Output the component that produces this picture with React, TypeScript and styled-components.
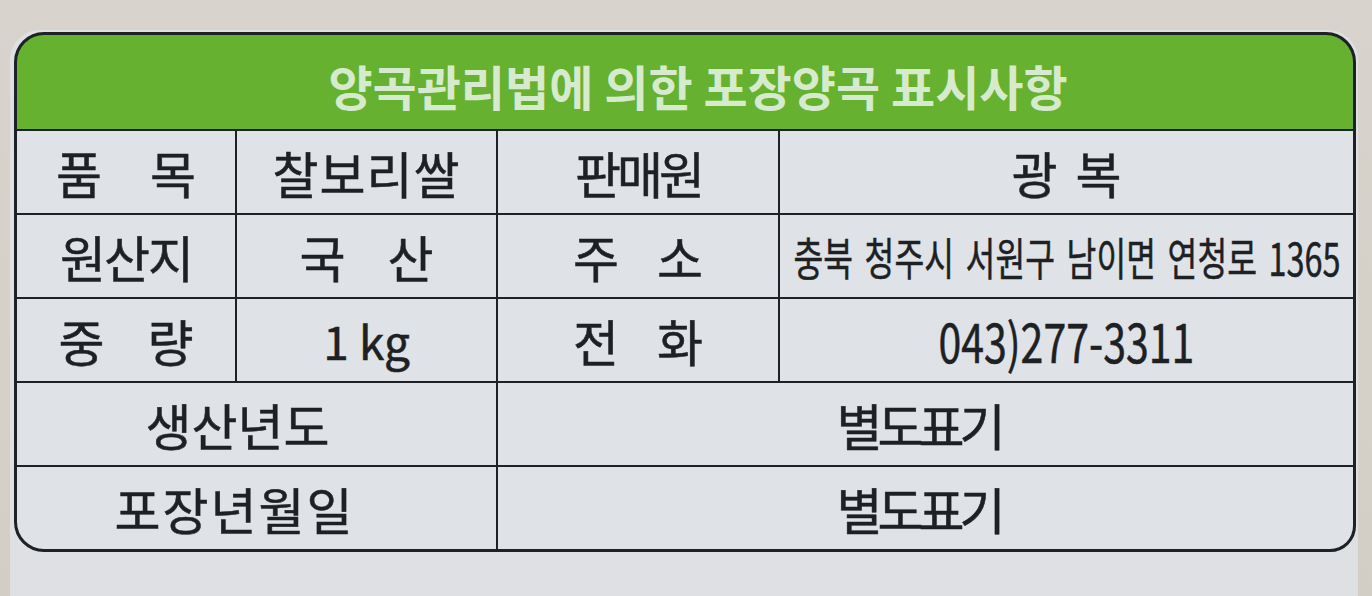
import React from "react";
import styled, { createGlobalStyle } from "styled-components";

const GlobalStyle = createGlobalStyle`
  html, body {
    margin: 0;
    padding: 0;
    background: #d6d1c8;
  }
  body {
    font-family: "Noto Sans CJK KR", "Noto Sans", sans-serif;
    color: #1d2124;
  }
`;

const Page = styled.div`
  width: 1372px;
  height: 596px;
  box-sizing: border-box;
  padding: 30px 0 0 10px;
  overflow: hidden;
  background: linear-gradient(180deg, #d8d4cd 0%, #d3cec5 100%);
`;

const Sticker = styled.div`
  width: 1348px;
  height: 566px;
  box-sizing: border-box;
  padding: 2px 2px 0 4px;
  background: #dee0e3;
  border-radius: 30px 30px 0 0;
`;

const Table = styled.div`
  width: 1342px;
  box-sizing: border-box;
  display: grid;
  grid-template-columns: 218px 259px 280px 573px;
  grid-template-rows: 94px repeat(5, 82px);
  gap: 2px;
  background: #1e2226;
  border: 3px solid #1e2226;
  border-radius: 30px 30px 26px 30px;
  overflow: hidden;
`;

const Header = styled.div`
  grid-column: 1 / -1;
  display: flex;
  align-items: center;
  justify-content: center;
  padding: 6px 0 0 26px;
  background: #67b130;
  color: #d6eacd;
  font-size: 48px;
  font-weight: 700;
  letter-spacing: 0;
  white-space: nowrap;
`;

const Cell = styled.div<{
  $span?: number;
  $track?: number;
  $shift?: number;
  $size?: number;
}>`
  grid-column: span ${(p) => p.$span ?? 1};
  display: flex;
  align-items: center;
  justify-content: center;
  box-sizing: border-box;
  padding-right: ${(p) => p.$shift ?? 0}px;
  background: #dfe2e6;
  font-size: ${(p) => p.$size ?? 50}px;
  font-weight: 400;
  line-height: 1;
  letter-spacing: ${(p) => p.$track ?? 0}px;
  white-space: nowrap;
  -webkit-text-stroke: 0.5px #1d2124;
`;

const Spaced = styled.span<{ $gap: number }>`
  display: flex;
  gap: ${(p) => p.$gap}px;
  letter-spacing: 0;
`;

const Condensed = styled.span<{ $sx: number; $size: number; $word?: number }>`
  display: inline-block;
  font-size: ${(p) => p.$size}px;
  transform: scaleX(${(p) => p.$sx});
  transform-origin: center;
  word-spacing: ${(p) => p.$word ?? 0}px;
  letter-spacing: 0;
`;

const Spread = ({ text, gap }: { text: string; gap: number }) => (
  <Spaced $gap={gap}>
    {text.split("").map((ch, i) => (
      <span key={i}>{ch}</span>
    ))}
  </Spaced>
);

export default function App() {
  return (
    <>
      <GlobalStyle />
      <Page>
        <Sticker>
          <Table>
            <Header>양곡관리법에 의한 포장양곡 표시사항</Header>

            <Cell>
              <Spread text="품목" gap={48} />
            </Cell>
            <Cell $track={1}>찰보리쌀</Cell>
            <Cell $track={-4}>판매원</Cell>
            <Cell>
              <Spread text="광복" gap={18} />
            </Cell>

            <Cell $track={-2}>원산지</Cell>
            <Cell>
              <Spread text="국산" gap={42} />
            </Cell>
            <Cell>
              <Spread text="주소" gap={38} />
            </Cell>
            <Cell>
              <Condensed $sx={0.72} $size={45} $word={6}>
                충북 청주시 서원구 남이면 연청로 1365
              </Condensed>
            </Cell>

            <Cell>
              <Spread text="중량" gap={43} />
            </Cell>
            <Cell $size={46}>1 kg</Cell>
            <Cell>
              <Spread text="전화" gap={38} />
            </Cell>
            <Cell>
              <Condensed $sx={0.76} $size={54}>
                043)277-3311
              </Condensed>
            </Cell>

            <Cell $span={2} $track={0} $shift={38}>
              생산년도
            </Cell>
            <Cell $span={2} $track={-5} $shift={14}>
              별도표기
            </Cell>

            <Cell $span={2} $track={2} $shift={44}>
              포장년월일
            </Cell>
            <Cell $span={2} $track={-5} $shift={14}>
              별도표기
            </Cell>
          </Table>
        </Sticker>
      </Page>
    </>
  );
}
